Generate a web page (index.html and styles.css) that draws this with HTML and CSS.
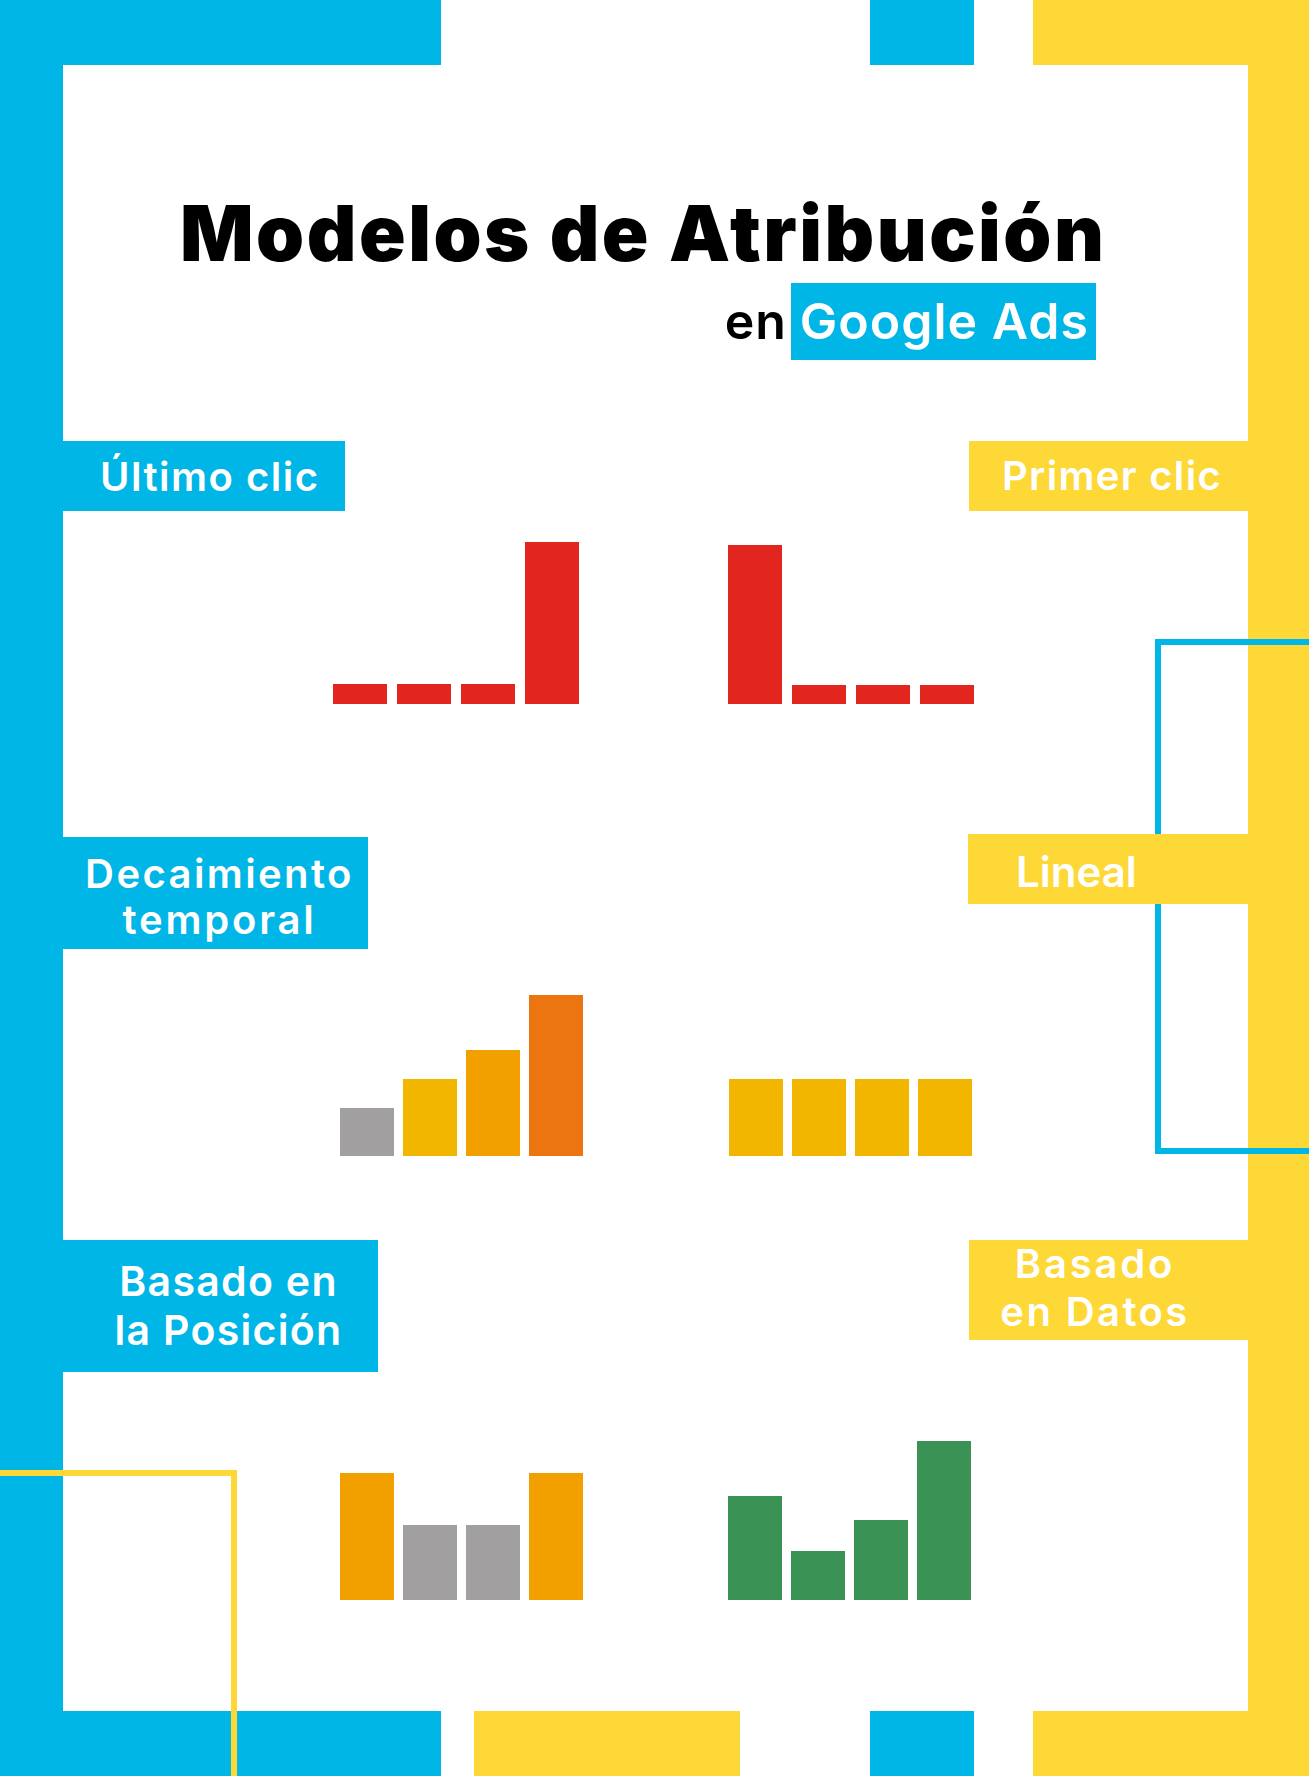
FILE: index.html
```html
<!DOCTYPE html>
<html lang="es">
<head>
<meta charset="utf-8">
<title>Modelos de Atribución en Google Ads</title>
<link rel="stylesheet" href="styles.css">
</head>
<body>
<div class="poster">
  <div class="strip strip-top">
    <div class="seg blue"></div>
    <div class="seg"></div>
    <div class="seg blue"></div>
    <div class="seg"></div>
    <div class="seg yellow"></div>
  </div>

  <div class="middle">
    <div class="rail blue"></div>
    <main class="content">
      <header class="head">
        <h1 class="title">Modelos de Atribución</h1>
        <p class="subtitle"><span class="en">en</span><span class="badge">Google Ads</span></p>
      </header>

      <section class="model model-1">
        <div class="labels">
          <div class="label blue lb-ultimo">Último clic</div>
          <div class="label yellow lb-primer">Primer clic</div>
        </div>
        <div class="charts charts-1">
          <div class="chart">
            <div class="bar red" style="height:20px"></div>
            <div class="bar red" style="height:20px"></div>
            <div class="bar red" style="height:20px"></div>
            <div class="bar red" style="height:162px"></div>
          </div>
          <div class="chart">
            <div class="bar red" style="height:159px"></div>
            <div class="bar red" style="height:19px"></div>
            <div class="bar red" style="height:19px"></div>
            <div class="bar red" style="height:19px"></div>
          </div>
        </div>
      </section>

      <section class="model model-2">
        <div class="labels">
          <div class="label blue lb-decay"><span class="ln ln-decay">Decaimiento</span><span class="ln ln-temp">temporal</span></div>
          <div class="label yellow lb-lineal">Lineal</div>
        </div>
        <div class="charts charts-2">
          <div class="chart">
            <div class="bar gray" style="height:48px"></div>
            <div class="bar amber" style="height:77px"></div>
            <div class="bar orange" style="height:106px"></div>
            <div class="bar dark-orange" style="height:161px"></div>
          </div>
          <div class="chart">
            <div class="bar amber" style="height:77px"></div>
            <div class="bar amber" style="height:77px"></div>
            <div class="bar amber" style="height:77px"></div>
            <div class="bar amber" style="height:77px"></div>
          </div>
        </div>
      </section>

      <section class="model model-3">
        <div class="labels">
          <div class="label blue lb-posicion"><span class="ln">Basado en</span><span class="ln">la Posición</span></div>
          <div class="label yellow lb-datos"><span class="ln ln-basado">Basado</span><span class="ln">en Datos</span></div>
        </div>
        <div class="charts charts-3">
          <div class="chart">
            <div class="bar orange" style="height:127px"></div>
            <div class="bar gray" style="height:75px"></div>
            <div class="bar gray" style="height:75px"></div>
            <div class="bar orange" style="height:127px"></div>
          </div>
          <div class="chart">
            <div class="bar green" style="height:104px"></div>
            <div class="bar green" style="height:49px"></div>
            <div class="bar green" style="height:80px"></div>
            <div class="bar green" style="height:159px"></div>
          </div>
        </div>
      </section>
    </main>
    <div class="rail yellow"></div>
  </div>

  <div class="strip strip-bottom">
    <div class="seg blue"></div>
    <div class="seg"></div>
    <div class="seg yellow"></div>
    <div class="seg"></div>
    <div class="seg blue"></div>
    <div class="seg"></div>
    <div class="seg yellow"></div>
  </div>

  <div class="deco deco-yellow"></div>
  <div class="deco deco-blue"></div>
</div>
</body>
</html>
```

FILE: styles.css
```css
* { box-sizing: border-box; }

html, body {
  margin: 0;
  padding: 0;
  background: #ffffff;
}

body {
  font-family: "Inter", "Open Sans", "Liberation Sans", sans-serif;
}

.poster {
  position: relative;
  width: 1309px;
  height: 1776px;
  overflow: hidden;
  background: #ffffff;
  display: flex;
  flex-direction: column;
}

.blue { background: #00b6e6; }
.yellow { background: #fdd836; }

/* top & bottom strips */
.strip {
  display: grid;
  height: 65px;
  flex: none;
}
.strip-top { grid-template-columns: 441px 429px 104px 59px 1fr; }
.strip-bottom { grid-template-columns: 441px 33px 266px 130px 104px 59px 1fr; }

/* middle */
.middle {
  flex: 1;
  display: grid;
  grid-template-columns: 63px 1fr 61px;
}

.content {
  display: flex;
  flex-direction: column;
}

/* heading */
.head {
  padding-top: 130px;
}
.title {
  margin: 0;
  padding-left: 117px;
  font-family: "Inter", "Liberation Sans", sans-serif;
  font-weight: 900;
  font-size: 77px;
  line-height: 77px;
  letter-spacing: 2.5px;
  color: #000000;
  white-space: nowrap;
}
.subtitle {
  margin: 11px 0 0 0;
  padding-right: 152px;
  display: flex;
  justify-content: flex-end;
  align-items: center;
  height: 77px;
  font-weight: 600;
  font-size: 50px;
  line-height: 77px;
  letter-spacing: 1px;
}
.en {
  color: #000000;
  margin-right: 4px;
}
.badge {
  background: #00b6e6;
  color: #ffffff;
  height: 77px;
  padding: 0 7px 0 9px;
}

/* model sections */
.labels {
  display: flex;
  justify-content: space-between;
  align-items: flex-start;
}
.label {
  position: relative;
  z-index: 2;
  color: #ffffff;
  font-weight: 600;
  font-size: 40px;
  line-height: 40px;
  letter-spacing: 1.5px;
  white-space: nowrap;
}
.ln { display: block; }

.model-1 { margin-top: 81px; }
.model-2 { margin-top: 130px; }
.model-3 { margin-top: 84px; }

.lb-ultimo {
  width: 282px;
  height: 70px;
  padding: 16px 0 0 37px;
}
.lb-primer {
  width: 279px;
  height: 70px;
  padding: 15px 0 0 33px;
  letter-spacing: 1.3px;
}
.lb-decay {
  margin-top: 3px;
  width: 305px;
  height: 112px;
  padding: 14px 0 0 8px;
  text-align: center;
  font-size: 40px;
  line-height: 46px;
}
.ln-decay { letter-spacing: 2.4px; }
.ln-temp { letter-spacing: 2.8px; }
.lb-lineal {
  width: 280px;
  height: 70px;
  padding: 17px 0 0 48px;
  font-size: 42px;
  line-height: 42px;
  letter-spacing: 0;
}
.lb-posicion {
  width: 315px;
  height: 132px;
  padding: 17px 0 0 16px;
  text-align: center;
  font-size: 41px;
  line-height: 49px;
  letter-spacing: 1.3px;
}
.lb-datos {
  width: 279px;
  height: 100px;
  padding: 0 27px 0 0;
  text-align: center;
  font-size: 40px;
  line-height: 48px;
  letter-spacing: 2.4px;
}
.ln-basado { letter-spacing: 2.8px; }

/* charts */
.charts {
  display: flex;
  align-items: flex-end;
}
.charts-1 { height: 193px; padding-left: 270px; gap: 149px; }
.charts-2 { height: 207px; padding-left: 277px; gap: 146px; }
.charts-3 { height: 228px; padding-left: 277px; gap: 145px; }

.chart {
  display: flex;
  align-items: flex-end;
  gap: 9px;
}
.charts-1 .chart { gap: 10px; }

.bar { width: 54px; }
.red { background: #e3251f; }
.gray { background: #a19fa0; }
.amber { background: #f2b600; }
.orange { background: #f2a000; }
.dark-orange { background: #ec7512; }
.green { background: #3a9255; }

/* decorative outlines laid over the frame */
.deco {
  position: absolute;
  z-index: 1;
  pointer-events: none;
}
.deco-yellow {
  left: 0;
  top: 1470px;
  width: 237px;
  height: 306px;
  border-top: 6px solid #fdd836;
  border-right: 6px solid #fdd836;
}
.deco-blue {
  left: 1155px;
  top: 639px;
  width: 154px;
  height: 515px;
  border-top: 6px solid #00b6e6;
  border-left: 6px solid #00b6e6;
  border-bottom: 6px solid #00b6e6;
}
```
